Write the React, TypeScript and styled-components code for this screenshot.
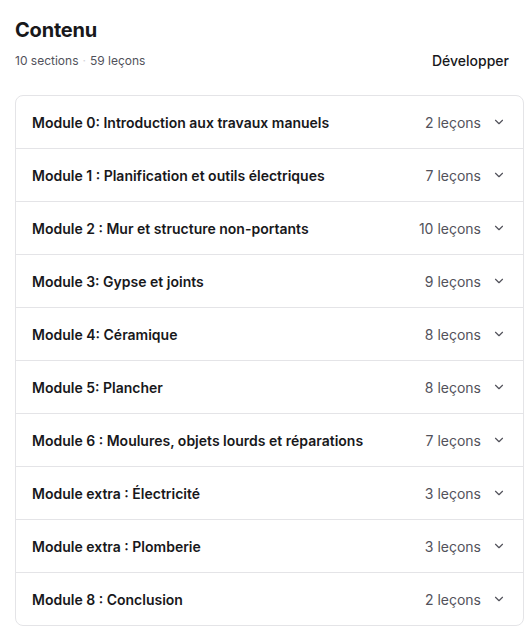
import React, { FC } from "react";
import styled, { createGlobalStyle } from "styled-components";
import { ChevronDown } from "lucide-react";

const GlobalStyle = createGlobalStyle`
	body {
		margin: 0;
		background: #fff;
		font-family: Inter, "Noto Sans", sans-serif;
		color: #18181b;
	}
`;

const modules = [
	{ title: "Module 0: Introduction aux travaux manuels", count: 2 },
	{ title: "Module 1 : Planification et outils électriques", count: 7 },
	{ title: "Module 2 : Mur et structure non-portants", count: 10 },
	{ title: "Module 3: Gypse et joints", count: 9 },
	{ title: "Module 4: Céramique", count: 8 },
	{ title: "Module 5: Plancher", count: 8 },
	{ title: "Module 6 : Moulures, objets lourds et réparations", count: 7 },
	{ title: "Module extra : Électricité", count: 3 },
	{ title: "Module extra : Plomberie", count: 3 },
	{ title: "Module 8 : Conclusion", count: 2 },
];

const Page = styled.main`
	padding: 17px 8px 0 15px;
`;

const Title = styled.h2`
	margin: 0;
	font-size: 20px;
	line-height: 26px;
	font-weight: 700;
	letter-spacing: -0.2px;
`;

const Toolbar = styled.div`
	display: flex;
	align-items: center;
	justify-content: space-between;
	padding-right: 15px;
	margin-top: 9px;
`;

const Meta = styled.div`
	font-size: 12px;
	color: #52525b;
	display: flex;
	align-items: center;
	gap: 4px;
`;

const Dot = styled.span`
	color: #d4d4d8;
`;

const ExpandButton = styled.button`
	background: none;
	border: none;
	padding: 0;
	font-family: inherit;
	font-size: 14px;
	font-weight: 500;
	color: #18181b;
	cursor: pointer;
`;

const Card = styled.section`
	margin-top: 26px;
	border: 1px solid #e4e4e7;
	border-radius: 8px;
	overflow: hidden;
`;

const Row = styled.div`
	height: 52px;
	display: flex;
	align-items: center;
	justify-content: space-between;
	padding: 0 17px 0 16px;
	&:not(:last-child) {
		border-bottom: 1px solid #e4e4e7;
	}
`;

const RowTitle = styled.span`
	font-size: 14px;
	font-weight: 600;
	color: #18181b;
`;

const RowRight = styled.div`
	display: flex;
	align-items: center;
	gap: 11px;
	font-size: 14px;
	color: #52525b;
`;

const App: FC = () => (
	<Page>
		<GlobalStyle />
		<Title>Contenu</Title>
		<Toolbar>
			<Meta>
				<span>10 sections</span>
				<Dot>·</Dot>
				<span>59 leçons</span>
			</Meta>
			<ExpandButton>Développer</ExpandButton>
		</Toolbar>
		<Card>
			{modules.map(m => (
				<Row key={m.title}>
					<RowTitle>{m.title}</RowTitle>
					<RowRight>
						<span>{m.count} leçons</span>
						<ChevronDown size={14} strokeWidth={2} color="#52525b" />
					</RowRight>
				</Row>
			))}
		</Card>
	</Page>
);

export default App;
